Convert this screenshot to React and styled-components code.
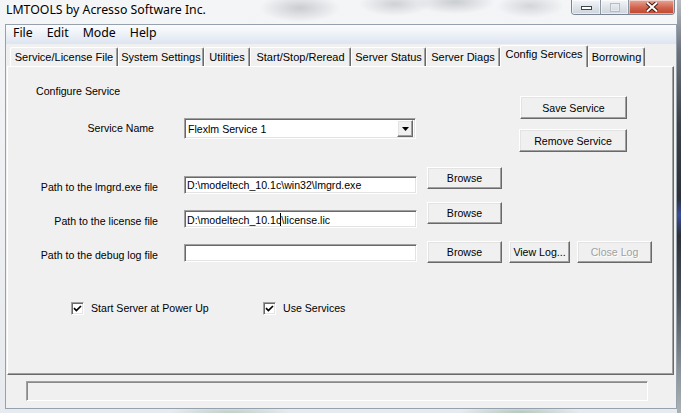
import React from 'react'
import styled, { createGlobalStyle } from 'styled-components'

const GlobalStyle = createGlobalStyle`
  html, body {
    margin: 0;
    padding: 0;
  }
  body {
    width: 681px;
    height: 413px;
    overflow: hidden;
    background: #2b2e35;
    font-family: "Liberation Sans", Arial, sans-serif;
  }
`

const Screen = styled.div`
  display: flex;
  width: 681px;
  height: 413px;
  overflow: hidden;
`
const Window = styled.div`
  display: flex;
  flex-direction: column;
  width: 677px;
  height: 413px;
  background:
    radial-gradient(ellipse 40px 14px at 300px 8px, rgba(150, 155, 162, 0.45), transparent),
    radial-gradient(ellipse 36px 12px at 395px 4px, rgba(150, 155, 162, 0.4), transparent),
    radial-gradient(ellipse 40px 12px at 455px 2px, rgba(150, 155, 162, 0.45), transparent),
    radial-gradient(ellipse 34px 12px at 530px 6px, rgba(150, 155, 162, 0.35), transparent),
    radial-gradient(ellipse 60px 6px at 520px 412px, rgba(120, 160, 130, 0.45), transparent),
    radial-gradient(ellipse 60px 6px at 230px 412px, rgba(120, 160, 130, 0.35), transparent),
    linear-gradient(#f4f5f7, #e7eaee);
`
const DesktopStrip = styled.div`
  width: 4px;
  height: 413px;
  background: linear-gradient(
    #b9bec4 0%,
    #6d737c 12%,
    #3c3f46 30%,
    #2d3037 48%,
    #3a4c9c 52%,
    #2d3037 57%,
    #4a4f57 72%,
    #8b949a 90%,
    #aab2b4 100%
  );
`
const TitleBar = styled.div`
  display: flex;
  align-items: flex-start;
  justify-content: space-between;
  height: 24px;
`
const Title = styled.div`
  padding: 2px 0 0 6px;
  font-family: "Noto Sans", "Open Sans", sans-serif;
  font-size: 12.3px;
  line-height: 16px;
  color: #000;
  text-shadow: 0 0 6px #fff, 0 0 10px #fff;
`
const CaptionButtons = styled.div`
  display: flex;
  margin-right: 2px;
  border: 1px solid #7b8592;
  border-top: none;
  border-radius: 0 0 4px 4px;
  overflow: hidden;
`
const CaptionButton = styled.div`
  display: flex;
  align-items: center;
  justify-content: center;
  width: ${(props) => props.$w}px;
  height: 14px;
  background: ${(props) =>
    props.$close
      ? 'linear-gradient(#e7a697, #d0634d 55%, #c2432d)'
      : 'linear-gradient(#f4f6f8, #dde2e8 55%, #cdd4dc)'};
  border-left: ${(props) => (props.$first ? 'none' : '1px solid #8c95a1')};
  box-shadow: inset 0 0 0 1px rgba(255, 255, 255, 0.55);
`

const Client = styled.div`
  display: flex;
  flex-direction: column;
  width: 672px;
  height: 385px;
  margin-left: 5px;
  border: 1px solid #96a1ae;
  box-sizing: border-box;
  background: #f0f0f0;
`
const MenuBar = styled.div`
  display: flex;
  align-items: flex-start;
  height: 19px;
  background: linear-gradient(#fbfcfe, #eef2f8 45%, #dde5f0);
`
const MenuItem = styled.div`
  padding: 0 7px;
  font-family: "Noto Sans", "Open Sans", sans-serif;
  font-size: 12.3px;
  line-height: 16px;
  color: #000;
`

const TabStrip = styled.div`
  display: flex;
  align-items: flex-end;
  height: 22px;
  padding-left: 4px;
`
const Tab = styled.div`
  position: relative;
  z-index: ${(props) => (props.$active ? 1 : 0)};
  width: ${(props) => props.$w}px;
  height: ${(props) => (props.$active ? 22 : 19)}px;
  margin-bottom: ${(props) => (props.$active ? -1 : 0)}px;
  box-sizing: border-box;
  border-top: 1px solid #fff;
  border-left: 1px solid #fff;
  border-right: 1px solid #696969;
  border-radius: 2px 2px 0 0;
  box-shadow: inset -1px 0 0 #a0a0a0;
  background: #f0f0f0;
  font-size: 11px;
  line-height: ${(props) => (props.$active ? 17 : 18)}px;
  text-align: center;
  color: #000;
  white-space: nowrap;
`

const Panel = styled.div`
  display: flex;
  flex-direction: column;
  width: 667px;
  height: 309px;
  margin-left: 1px;
  box-sizing: border-box;
  border-top: 1px solid #fff;
  border-left: 1px solid #fff;
  border-right: 1px solid #696969;
  border-bottom: 1px solid #696969;
  box-shadow: inset -1px -1px 0 #a0a0a0;
  font-size: 10.6px;
  color: #000;
`
const TopSection = styled.div`
  display: flex;
  align-items: flex-start;
`
const LeftCol = styled.div`
  display: flex;
  flex-direction: column;
  width: 408px;
  padding-top: 17px;
`
const Heading = styled.div`
  padding-left: 28px;
  line-height: 15px;
`
const ServiceRow = styled.div`
  display: flex;
  align-items: center;
  gap: 30px;
  margin-top: 19px;
  height: 21px;
`
const Label = styled.div`
  flex: none;
  width: ${(props) => props.$w}px;
  height: ${(props) => (props.$h ? `${props.$h}px` : 'auto')};
  margin-top: ${(props) => props.$drop || 0}px;
  padding-top: ${(props) => props.$pad || 0}px;
  box-sizing: border-box;
  line-height: 13px;
  text-align: right;
  white-space: nowrap;
`
const RightCol = styled.div`
  display: flex;
  flex-direction: column;
  align-items: flex-start;
  gap: 10px;
  margin: 29px 0 0 104px;
`
const Button = styled.div`
  display: flex;
  align-items: center;
  justify-content: center;
  flex: none;
  width: ${(props) => props.$w}px;
  height: ${(props) => props.$h || 22}px;
  margin-left: ${(props) => props.$ml || 0}px;
  box-sizing: border-box;
  border: 1px solid;
  border-color: #fff #696969 #696969 #fff;
  box-shadow: inset -1px -1px 0 #a0a0a0, inset 1px 1px 0 #e3e3e3;
  background: #f0f0f0;
  color: ${(props) => (props.$disabled ? '#a0a0a0' : '#000')};
  text-shadow: ${(props) => (props.$disabled ? '1px 1px 0 #fff' : 'none')};
  white-space: nowrap;
`
const Sunken = styled.div`
  display: flex;
  align-items: center;
  flex: none;
  box-sizing: border-box;
  border: 1px solid;
  border-color: #a0a0a0 #fff #fff #a0a0a0;
  box-shadow: inset 1px 1px 0 #696969, inset -1px -1px 0 #e3e3e3;
  background: #fff;
`
const Combo = styled(Sunken)`
  width: 232px;
  height: 21px;
  padding: 2px;
`
const ComboText = styled.div`
  flex: 1;
  padding-left: 1px;
  white-space: nowrap;
`
const DropButton = styled(Button)`
  width: 16px;
  height: 17px;
`
const TextField = styled(Sunken)`
  width: 233px;
  height: 18px;
  margin-left: 26px;
  margin-top: ${(props) => props.$drop}px;
  padding-left: 2px;
  white-space: nowrap;
`
const Caret = styled.span`
  display: inline-block;
  width: 1px;
  height: 13px;
  margin-left: -1px;
  vertical-align: -2px;
  background: #000;
`
const PathRow = styled.div`
  display: flex;
  align-items: flex-start;
  margin-top: ${(props) => props.$top}px;
`
const CheckRow = styled.div`
  display: flex;
  align-items: center;
  margin-top: 39px;
  padding-left: 63px;
`
const CheckItem = styled.div`
  display: flex;
  align-items: center;
  gap: 7px;
  width: ${(props) => props.$w || 'auto'};
  line-height: 13px;
`
const CheckBox = styled(Sunken)`
  justify-content: center;
  width: 13px;
  height: 13px;
`
const StatusBox = styled.div`
  width: 622px;
  height: 20px;
  margin: 6px 0 0 20px;
  box-sizing: border-box;
  border: 1px solid;
  border-color: #a0a0a0 #fff #fff #a0a0a0;
  box-shadow: inset 1px 1px 0 #8a8a8a;
`

const tabs = [
  { label: 'Service/License File', w: 108 },
  { label: 'System Settings', w: 86 },
  { label: 'Utilities', w: 46 },
  { label: 'Start/Stop/Reread', w: 101 },
  { label: 'Server Status', w: 75 },
  { label: 'Server Diags', w: 74 },
  { label: 'Config Services', w: 88, active: true },
  { label: 'Borrowing', w: 57 },
]

const menus = ['File', 'Edit', 'Mode', 'Help']

const Check = () => (
  <svg width="9" height="9" viewBox="0 0 9 9">
    <path d="M1 4.2 L3.4 6.6 L8 2" fill="none" stroke="#000" strokeWidth="1.7" />
  </svg>
)

const Arrow = () => (
  <svg width="7" height="4" viewBox="0 0 7 4">
    <polygon points="0,0 7,0 3.5,4" fill="#000" />
  </svg>
)

export default function App() {
  return (
    <>
      <GlobalStyle />
      <Screen>
        <Window>
          <TitleBar>
            <Title>LMTOOLS by Acresso Software Inc.</Title>
            <CaptionButtons>
              <CaptionButton $w={28} $first>
                <svg width="11" height="6" viewBox="0 0 11 6">
                  <rect x="0.5" y="2.5" width="10" height="3" fill="#fff" stroke="#3b4550" />
                </svg>
              </CaptionButton>
              <CaptionButton $w={27}>
                <svg width="10" height="9" viewBox="0 0 10 9">
                  <rect x="0.5" y="0.5" width="9" height="8" fill="none" stroke="#b4bcc6" />
                  <rect x="1.5" y="2.5" width="7" height="5" fill="none" stroke="#e6eaee" />
                </svg>
              </CaptionButton>
              <CaptionButton $w={45} $close>
                <svg width="14" height="10" viewBox="0 0 14 10">
                  <path d="M2 0.5 L12 9.5 M12 0.5 L2 9.5" stroke="#4a1a14" strokeWidth="4" />
                  <path d="M2 0.5 L12 9.5 M12 0.5 L2 9.5" stroke="#fff" strokeWidth="2" />
                </svg>
              </CaptionButton>
            </CaptionButtons>
          </TitleBar>

          <Client>
            <MenuBar>
              {menus.map((m) => (
                <MenuItem key={m}>{m}</MenuItem>
              ))}
            </MenuBar>

            <TabStrip>
              {tabs.map((t) => (
                <Tab key={t.label} $w={t.w} $active={t.active}>
                  {t.label}
                </Tab>
              ))}
            </TabStrip>

            <Panel>
              <TopSection>
                <LeftCol>
                  <Heading>Configure Service</Heading>
                  <ServiceRow>
                    <Label $w={146}>Service Name</Label>
                    <Combo>
                      <ComboText>Flexlm Service 1</ComboText>
                      <DropButton $w={16}>
                        <Arrow />
                      </DropButton>
                    </Combo>
                  </ServiceRow>
                </LeftCol>
                <RightCol>
                  <Button $w={107} $h={23}>Save Service</Button>
                  <Button $w={108} $h={23} $ml={-1}>Remove Service</Button>
                </RightCol>
              </TopSection>

              <PathRow $top={15}>
                <Label $w={150} $h={18} $drop={9} $pad={5}>Path to the lmgrd.exe file</Label>
                <TextField $drop={9}>D:\modeltech_10.1c\win32\lmgrd.exe</TextField>
                <Button $w={75} $ml={10}>Browse</Button>
              </PathRow>

              <PathRow $top={8}>
                <Label $w={150} $h={18} $drop={8} $pad={5}>Path to the license file</Label>
                <TextField $drop={8}>
                  <span>
                    D:\modeltech_10.1c
                    <Caret />
                    \license.lic
                  </span>
                </TextField>
                <Button $w={75} $ml={10}>Browse</Button>
              </PathRow>

              <PathRow $top={13}>
                <Label $w={150} $h={18} $drop={3} $pad={5}>Path to the debug log file</Label>
                <TextField $drop={3} />
                <Button $w={75} $ml={10}>Browse</Button>
                <Button $w={61} $ml={7}>View Log...</Button>
                <Button $w={75} $ml={7} $disabled>Close Log</Button>
              </PathRow>

              <CheckRow>
                <CheckItem $w="192px">
                  <CheckBox>
                    <Check />
                  </CheckBox>
                  <span>Start Server at Power Up</span>
                </CheckItem>
                <CheckItem>
                  <CheckBox>
                    <Check />
                  </CheckBox>
                  <span>Use Services</span>
                </CheckItem>
              </CheckRow>
            </Panel>

            <StatusBox />
          </Client>
        </Window>
        <DesktopStrip />
      </Screen>
    </>
  )
}
